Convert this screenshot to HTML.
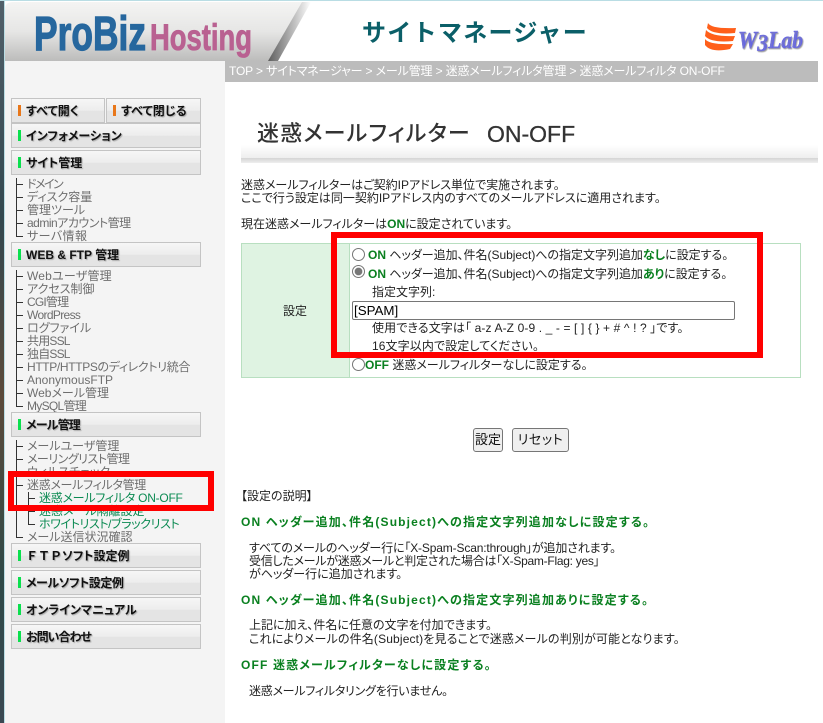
<!DOCTYPE html>
<html lang="ja"><head><meta charset="utf-8"><title>迷惑メールフィルター ON-OFF</title>
<style>
html,body{margin:0;padding:0;background:#fff}
body{position:relative;width:823px;height:723px;overflow:hidden;font:12px/13px "Liberation Sans","Noto Sans CJK JP",sans-serif;color:#222;font-feature-settings:"palt"}
.a,.t,.s,.g,.n,.m,.v,.h{position:absolute}
.t,.s,.g{white-space:nowrap;height:13px}
.s{left:27px;color:#6e6e6e}
.g{left:39px;color:#0b8a52}
.m{left:16px;width:7px;height:13px;border-left:1px solid #333}
.m:after{content:"";position:absolute;left:0;top:6px;width:6px;height:1px;background:#333}
.m.l{height:7px}
.v{left:16px;width:1px;background:#333}
.n{left:11px;width:188px;height:23px;border:1px solid #c4c4c4;background:linear-gradient(#f6f6f6,#ededed 50%,#e4e4e4 52%,#e4e4e4);font-weight:bold;color:#111;line-height:24px;white-space:nowrap;text-indent:14px;text-shadow:1px 1px 1px #aaa}
.n:before{content:"";position:absolute;left:6px;top:6px;width:3px;height:11px;background:#0be04e}
.n.o:before{background:#e8771a}
.h{left:241px;color:#0a8020;font-weight:bold;white-space:nowrap;height:13px;letter-spacing:1.16px}
b.c{color:#0a8020}
.r{position:absolute;width:11px;height:11px;border:1px solid #767676;border-radius:50%;background:#fff;left:352px}
.r.on{background:radial-gradient(circle,#777 0,#777 3.5px,#fff 4.2px)}
.b{position:absolute;top:428px;height:24px;box-sizing:border-box;border:1px solid #767676;border-radius:3px;background:#efefef;text-align:center;font-size:13px;line-height:22px;color:#111}
</style></head><body>

<div class="a" style="left:0;top:0;width:4px;height:723px;background:linear-gradient(#51606a,#33484f 30%,#5c4a3a 55%,#2f4a48 80%,#3a4852)"></div>
<div class="a" style="left:4px;top:0;width:1px;height:723px;background:#b9dde4"></div>
<div class="a" style="left:5px;top:61px;width:220px;height:662px;background:#f4f4f4"></div>
<div class="a" style="left:0;top:0;width:823px;height:1px;background:#b9dde4"></div>

<svg class="a" style="left:5px;top:1px" width="330" height="60" viewBox="0 0 330 60">
<defs><linearGradient id="hg" x1="0" y1="0" x2="0" y2="1"><stop offset="0" stop-color="#f4f4f3"/><stop offset=".5" stop-color="#e6e6e5"/><stop offset="1" stop-color="#bcbcbb"/></linearGradient>
<linearGradient id="sh" x1="0" y1="0" x2="1" y2="0"><stop offset="0" stop-color="#555"/><stop offset="1" stop-color="#fff"/></linearGradient></defs>
<polygon points="294,1 306,1 273,60 261,60" fill="url(#sh)"/>
<path d="M8 1H297L263 60H0V8Q0 1 8 1Z" fill="url(#hg)"/>
<text x="29" y="49" font-family="Liberation Sans" font-weight="bold" font-size="48" fill="#26679e" stroke="#26679e" stroke-width="1.2" textLength="112" lengthAdjust="spacingAndGlyphs">ProBiz</text>
<text x="145" y="49" font-family="Liberation Sans" font-weight="bold" font-size="37" fill="#b96191" stroke="#b96191" stroke-width=".8" textLength="102" lengthAdjust="spacingAndGlyphs">Hosting</text>
</svg>

<div class="t" style="left:362px;top:21px;height:26px;font-size:24px;line-height:26px;font-weight:bold;color:#0b5f68;font-feature-settings:normal;letter-spacing:1.3px">サイトマネージャー</div>

<svg class="a" style="left:700px;top:18px" width="110" height="42" viewBox="0 0 110 42">
<path d="M8 5Q11 11 36 10L35 15Q13 17 7 10ZM6 12Q12 19 35 18L33 23Q11 25 5 18ZM5 21Q9 27 33 26L30 31Q11 35 5 27Z" fill="#ff5f1a"/>
<text x="38" y="30" font-family="Liberation Serif" font-style="italic" font-weight="bold" font-size="24" fill="#6666e4" stroke="#6666e4" stroke-width=".4" textLength="65" lengthAdjust="spacingAndGlyphs" style="text-shadow:1px 1px 1px #999">W<tspan dy="3">3</tspan><tspan dy="-3">Lab</tspan></text>
</svg>

<div class="a" style="left:225px;top:61px;width:593px;height:21px;background:#bcbcbc"></div>
<div class="t" style="left:229px;top:65px;color:#fff;letter-spacing:-.15px">TOP &gt; サイトマネージャー &gt; メール管理 &gt; 迷惑メールフィルタ管理 &gt; 迷惑メールフィルタ ON-OFF</div>

<div class="a" style="left:241px;top:145px;width:577px;height:13px;background:linear-gradient(#fff,#eee)"></div>
<div class="a" style="left:241px;top:158px;width:577px;height:5px;background:linear-gradient(#d4d4d4,#eee)"></div>
<div class="t" style="left:257px;top:120px;height:28px;font-size:22px;line-height:28px;font-weight:500;color:#333;letter-spacing:1.2px">迷惑メールフィルター</div>
<div class="t" style="left:487px;top:120px;height:28px;font-size:23px;line-height:28px;color:#333;-webkit-text-stroke:.3px #333">ON-OFF</div>

<!-- sidebar -->
<div class="n o" style="top:98px;width:92px">すべて開く</div>
<div class="n o" style="top:98px;left:106px;width:93px">すべて閉じる</div>
<div class="n" style="top:123px">インフォメーション</div>
<div class="n" style="top:150px">サイト管理</div>

<div class="m" style="top:178px"></div><div class="s" style="top:178px;letter-spacing:-1.5px">ドメイン</div>
<div class="m" style="top:191px"></div><div class="s" style="top:191px">ディスク容量</div>
<div class="m" style="top:204px"></div><div class="s" style="top:204px">管理ツール</div>
<div class="m" style="top:217px"></div><div class="s" style="top:217px;letter-spacing:-.5px">adminアカウント管理</div>
<div class="m l" style="top:230px"></div><div class="s" style="top:230px;letter-spacing:.4px">サーバ情報</div>

<div class="n" style="top:242px">WEB &amp; FTP 管理</div>

<div class="m" style="top:270px"></div><div class="s" style="top:270px;letter-spacing:.2px">Webユーザ管理</div>
<div class="m" style="top:283px"></div><div class="s" style="top:283px">アクセス制御</div>
<div class="m" style="top:296px"></div><div class="s" style="top:296px;letter-spacing:-.8px">CGI管理</div>
<div class="m" style="top:309px"></div><div class="s" style="top:309px;letter-spacing:-.65px">WordPress</div>
<div class="m" style="top:322px"></div><div class="s" style="top:322px">ログファイル</div>
<div class="m" style="top:335px"></div><div class="s" style="top:335px;letter-spacing:-.8px">共用SSL</div>
<div class="m" style="top:348px"></div><div class="s" style="top:348px;letter-spacing:-.8px">独自SSL</div>
<div class="m" style="top:361px"></div><div class="s" style="top:361px;letter-spacing:-.35px">HTTP/HTTPSのディレクトリ統合</div>
<div class="m" style="top:374px"></div><div class="s" style="top:374px">AnonymousFTP</div>
<div class="m" style="top:387px"></div><div class="s" style="top:387px">Webメール管理</div>
<div class="m l" style="top:400px"></div><div class="s" style="top:400px;letter-spacing:-.7px">MySQL管理</div>

<div class="n" style="top:412px;letter-spacing:-.8px">メール管理</div>

<div class="m" style="top:440px"></div><div class="s" style="top:440px">メールユーザ管理</div>
<div class="m" style="top:453px"></div><div class="s" style="top:453px;letter-spacing:-.5px">メーリングリスト管理</div>
<div class="m" style="top:466px"></div><div class="s" style="top:466px">ウィルスチェック</div>
<div class="m" style="top:479px"></div><div class="s" style="top:479px;letter-spacing:-.3px">迷惑メールフィルタ管理</div>
<div class="v" style="top:492px;height:39px"></div>
<div class="m" style="top:492px;left:28px"></div><div class="g" style="top:492px;letter-spacing:-.25px">迷惑メールフィルタ ON-OFF</div>
<div class="m" style="top:505px;left:28px"></div><div class="g" style="top:505px">迷惑メール隔離設定</div>
<div class="m l" style="top:518px;left:28px"></div><div class="g" style="top:518px;letter-spacing:-.4px">ホワイトリスト/ブラックリスト</div>
<div class="m l" style="top:531px"></div><div class="s" style="top:531px">メール送信状況確認</div>

<div class="n" style="top:543px"><span style="font-feature-settings:normal">ＦＴＰ</span>ソフト設定例</div>
<div class="n" style="top:570px;letter-spacing:-.45px">メールソフト設定例</div>
<div class="n" style="top:597px">オンラインマニュアル</div>
<div class="n" style="top:624px;letter-spacing:-1px">お問い合わせ</div>

<!-- main -->
<div class="t" style="left:241px;top:179px">迷惑メールフィルターはご契約IPアドレス単位で実施されます。</div>
<div class="t" style="left:241px;top:192px">ここで行う設定は同一契約IPアドレス内のすべてのメールアドレスに適用されます。</div>
<div class="t" style="left:241px;top:218px">現在迷惑メールフィルターは<b class="c">ON</b>に設定されています。</div>

<div class="a" style="left:241px;top:243px;width:558px;height:133px;border:1px solid #b8dfc0"></div>
<div class="a" style="left:242px;top:244px;width:107px;height:133px;background:#dff3e2;border-right:1px solid #b8dfc0"></div>
<div class="t" style="left:283px;top:305px">設定</div>

<div class="r" style="top:248px"></div>
<div class="t" style="left:368px;top:249px;letter-spacing:-.02px"><b class="c">ON</b> ヘッダー追加、件名(Subject)への指定文字列追加<b class="c">なし</b>に設定する。</div>
<div class="r on" style="top:265px"></div>
<div class="t" style="left:368px;top:268px;letter-spacing:-.02px"><b class="c">ON</b> ヘッダー追加、件名(Subject)への指定文字列追加<b class="c">あり</b>に設定する。</div>
<div class="t" style="left:372px;top:286px">指定文字列:</div>
<div class="a" style="left:352px;top:301px;width:381px;height:17px;border:1px solid #767676;border-radius:2px;background:#fff;font-size:13.33px;line-height:17px;text-indent:1px;color:#000;font-feature-settings:normal">[SPAM]</div>
<div class="t" style="left:372px;top:322px;letter-spacing:.12px">使用できる文字は「 a-z A-Z 0-9 . _ - = [ ] { } + # ^ ! ? 」です。</div>
<div class="t" style="left:372px;top:340px;letter-spacing:.1px">16文字以内で設定してください。</div>
<div class="r" style="top:358px"></div>
<div class="t" style="left:365px;top:359px"><b class="c">OFF</b> 迷惑メールフィルターなしに設定する。</div>

<div class="b" style="left:473px;width:30px">設定</div>
<div class="b" style="left:512px;width:57px;letter-spacing:.6px">リセット</div>

<div class="t" style="left:241px;top:490px">【設定の説明】</div>
<div class="h" style="top:516px">ON ヘッダー追加、件名(Subject)への指定文字列追加なしに設定する。</div>
<div class="t" style="left:249px;top:542px;letter-spacing:-.15px">すべてのメールのヘッダー行に「X-Spam-Scan:through」が追加されます。</div>
<div class="t" style="left:249px;top:555px;letter-spacing:-.27px">受信したメールが迷惑メールと判定された場合は「X-Spam-Flag: yes」</div>
<div class="t" style="left:249px;top:568px">がヘッダー行に追加されます。</div>
<div class="h" style="top:594px">ON ヘッダー追加、件名(Subject)への指定文字列追加ありに設定する。</div>
<div class="t" style="left:249px;top:619px">上記に加え、件名に任意の文字を付加できます。</div>
<div class="t" style="left:249px;top:633px;letter-spacing:.15px">これによりメールの件名(Subject)を見ることで迷惑メールの判別が可能となります。</div>
<div class="h" style="top:659px">OFF 迷惑メールフィルターなしに設定する。</div>
<div class="t" style="left:249px;top:685px;letter-spacing:-.25px">迷惑メールフィルタリングを行いません。</div>

<!-- red frames -->
<div class="a" style="left:331px;top:232px;width:420px;height:114px;border:6px solid #f00"></div>
<div class="a" style="left:8px;top:471px;width:194px;height:28px;border:6px solid #f00"></div>
</body></html>
